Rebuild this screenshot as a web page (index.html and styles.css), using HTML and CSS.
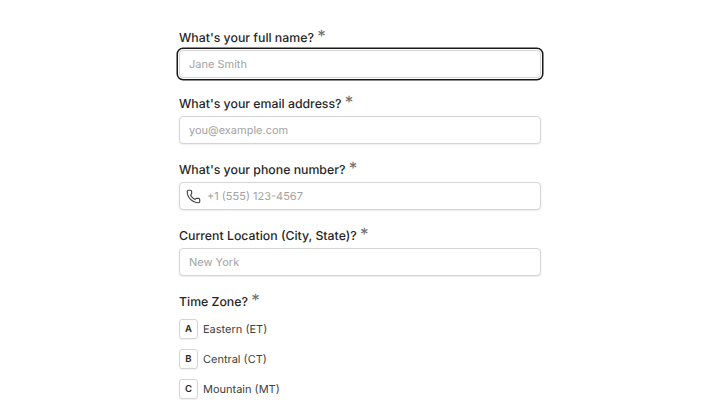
FILE: index.html
```html
<!DOCTYPE html>
<html lang="en">
<head>
<meta charset="utf-8">
<title>Form</title>
<link rel="stylesheet" href="styles.css">
</head>
<body>
<form class="form">
  <div class="field">
    <label class="label">What's your full name? <span class="req">*</span></label>
    <div class="input focused"><span class="ph">Jane Smith</span></div>
  </div>
  <div class="field">
    <label class="label">What's your email address? <span class="req">*</span></label>
    <div class="input"><span class="ph">you@example.com</span></div>
  </div>
  <div class="field">
    <label class="label">What's your phone number? <span class="req">*</span></label>
    <div class="input with-icon">
      <svg class="icon" viewBox="0 0 24 24" fill="none" stroke="currentColor" stroke-width="1.8" stroke-linecap="round" stroke-linejoin="round"><path d="M13.832 16.568a1 1 0 0 0 1.213-.303l.355-.465A2 2 0 0 1 17 15h3a2 2 0 0 1 2 2v3a2 2 0 0 1-2 2A18 18 0 0 1 2 4a2 2 0 0 1 2-2h3a2 2 0 0 1 2 2v3a2 2 0 0 1-.8 1.6l-.468.351a1 1 0 0 0-.292 1.233 14 14 0 0 0 6.392 6.384"/></svg>
      <span class="ph">+1 (555) 123-4567</span>
    </div>
  </div>
  <div class="field">
    <label class="label">Current Location (City, State)? <span class="req">*</span></label>
    <div class="input"><span class="ph">New York</span></div>
  </div>
  <div class="field">
    <label class="label">Time Zone? <span class="req">*</span></label>
    <div class="options">
      <div class="option"><span class="key">A</span><span class="opt-text">Eastern (ET)</span></div>
      <div class="option"><span class="key">B</span><span class="opt-text">Central (CT)</span></div>
      <div class="option"><span class="key">C</span><span class="opt-text">Mountain (MT)</span></div>
    </div>
  </div>
</form>
</body>
</html>
```
FILE: styles.css
```css
html, body {
  margin: 0;
  padding: 0;
  height: 405px;
  overflow: hidden;
  background: #fff;
}
body {
  font-family: Inter, "Liberation Sans", sans-serif;
  text-rendering: geometricPrecision;
}
.form {
  width: 362px;
  margin-left: 179px;
  padding-top: 27px;
  display: flex;
  flex-direction: column;
  gap: 15px;
}
.field {
  display: flex;
  flex-direction: column;
  gap: 5px;
}
.label {
  display: block;
  height: 18px;
  font-size: 12.3px;
  line-height: 22px;
  font-weight: 450;
  color: #262626;
  white-space: nowrap;
}
.req {
  font-size: 17px;
  line-height: 14px;
  font-weight: 400;
  color: #737373;
}
.input {
  box-sizing: border-box;
  height: 28px;
  display: flex;
  align-items: center;
  padding: 0 9px;
  background: #fff;
  border: 1px solid #d4d4d4;
  border-radius: 4px;
  box-shadow: 0 1px 2px rgba(0, 0, 0, 0.08);
}
.focused {
  box-shadow: 0 0 0 1px #fff, 0 0 0 2.5px #171717;
}
.with-icon {
  padding-left: 6px;
  gap: 6px;
}
.icon {
  width: 15px;
  height: 15px;
  color: #404040;
  flex: none;
}
.ph {
  font-size: 11px;
  color: #a3a3a3;
}
.options {
  display: flex;
  flex-direction: column;
  gap: 10px;
  padding-top: 5px;
}
.option {
  display: flex;
  align-items: center;
  gap: 5px;
  height: 20px;
}
.key {
  box-sizing: border-box;
  width: 19px;
  height: 20px;
  display: flex;
  align-items: center;
  justify-content: center;
  font-size: 9.5px;
  font-weight: 600;
  color: #262626;
  border: 1px solid #d4d4d4;
  border-radius: 3px;
  box-shadow: 0 1px 1px rgba(0, 0, 0, 0.06);
}
.opt-text {
  font-size: 11px;
  color: #404040;
}
```
